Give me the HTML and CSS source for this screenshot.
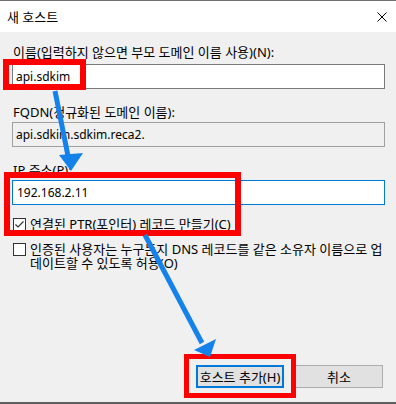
FILE: index.html
```html
<!DOCTYPE html>
<html lang="ko">
<head>
    <meta charset="UTF-8">
    <meta name="viewport" content="width=device-width, initial-scale=1.0">
    <title>새 호스트</title>
    <link rel="stylesheet" href="styles.css">
</head>
<body>
    <div class="dialog">
        <div class="titlebar">
            <span class="title">새 호스트</span>
            <svg class="close" width="10" height="10" viewBox="0 0 10 10">
                <path d="M0.5 0.5 L9.5 9.5 M9.5 0.5 L0.5 9.5" stroke="#000" stroke-width="1" fill="none"/>
            </svg>
        </div>

        <div class="content">
            <div class="field-label first">이름(입력하지 않으면 부모 도메인 이름 사용)(N):</div>
            <div class="textbox">api.sdkim</div>

            <div class="field-label">FQDN(정규화된 도메인 이름):</div>
            <div class="textbox readonly">api.sdkim.sdkim.reca2.</div>

            <div class="field-label">IP 주소(P):</div>
            <div class="textbox focused">192.168.2.11</div>

            <div class="check-row first">
                <span class="checkbox">
                    <svg width="11" height="11" viewBox="0 0 11 11">
                        <path d="M1.5 5.5 L4 8 L9.5 2.5" stroke="#333" stroke-width="1.2" fill="none"/>
                    </svg>
                </span>
                <span class="check-text">연결된 PTR(포인터) 레코드 만들기(C)</span>
            </div>

            <div class="check-row">
                <span class="checkbox"></span>
                <span class="check-text">인증된 사용자는 누구든지 DNS 레코드를 같은 소유자 이름으로 업데이트할 수 있도록 허용(O)</span>
            </div>

            <div class="buttons">
                <button class="btn default">호스트 추가(H)</button>
                <button class="btn">취소</button>
            </div>
        </div>

        <!-- 강조 표시 (빨간 박스, 파란 화살표) -->
        <div class="mark mark-name"></div>
        <div class="mark mark-ip"></div>
        <div class="mark mark-add"></div>

        <svg class="arrows" width="396" height="404" viewBox="0 0 396 404">
            <line x1="55" y1="91" x2="68" y2="156" stroke="#1582ec" stroke-width="5"/>
            <polygon points="59,155 83,153 71,171" fill="#1582ec"/>
            <line x1="145" y1="235" x2="202" y2="343" stroke="#1582ec" stroke-width="5"/>
            <polygon points="194,350 216,339 210,357" fill="#1582ec"/>
        </svg>
    </div>
</body>
</html>
```

FILE: styles.css
```css
* {
    margin: 0;
    padding: 0;
    box-sizing: border-box;
}

body {
    font-family: "Noto Sans", "Noto Sans CJK KR", sans-serif;
    font-size: 13px;
    color: #000;
    background-color: #f0f0f0;
}

.dialog {
    position: relative;
    width: 396px;
    height: 404px;
    border-top: 1px solid #707070;
    border-bottom: 2px solid #5f5f5f;
    background-color: #f0f0f0;
    overflow: hidden;
}

.titlebar {
    height: 31px;
    background-color: #fff;
    display: flex;
    align-items: center;
    justify-content: space-between;
    padding: 0 9px 0 7px;
}

.title {
    line-height: 16px;
}

.content {
    padding: 12px 11px 0 12px;
}

.field-label {
    line-height: 16px;
    padding-left: 1px;
    margin-top: 15px;
    margin-bottom: 2px;
}

.field-label.first {
    margin-top: 0;
    margin-bottom: 4px;
}

/* 입력 상자: 라틴 문자만 있으므로 12px */
.textbox {
    height: 25px;
    border: 1px solid #7a7a7a;
    background-color: #fff;
    padding-left: 3px;
    font-size: 12px;
    line-height: 23px;
    white-space: nowrap;
}

.textbox.readonly {
    background-color: #f0f0f0;
    border-color: #a0a0a0;
}

.textbox.focused {
    border-color: #0078d7;
    padding-left: 4px;
}

.check-row {
    display: flex;
    align-items: flex-start;
    gap: 4px;
    margin-top: 10px;
    padding-left: 1px;
}

.check-row.first {
    margin-top: 11px;
    align-items: center;
}

.check-row.first .check-text {
    line-height: 16px;
}

.checkbox {
    flex: none;
    width: 13px;
    height: 13px;
    border: 1px solid #333;
    background-color: #fff;
    display: flex;
    align-items: center;
    justify-content: center;
    margin-top: 1px;
}

.check-row.first .checkbox {
    margin-top: 0;
}

.check-text {
    line-height: 14px;
    width: 356px;
}

.buttons {
    display: flex;
    justify-content: flex-end;
    gap: 11px;
    margin-top: 95px;
    padding-right: 2px;
}

.btn {
    width: 88px;
    height: 23px;
    border: 1px solid #adadad;
    background-color: #e1e1e1;
    font-family: inherit;
    font-size: 13px;
    color: #000;
    line-height: 20px;
}

.btn.default {
    border: 2px solid #0078d7;
}

.mark {
    position: absolute;
    border: 6px solid #ff0000;
}

.mark-name {
    left: 3px;
    top: 58px;
    width: 83px;
    height: 31px;
}

.mark-ip {
    left: 4px;
    top: 171px;
    width: 237px;
    height: 64px;
}

.mark-add {
    left: 184px;
    top: 353px;
    width: 112px;
    height: 44px;
    border-width: 5px;
}

.arrows {
    position: absolute;
    left: 0;
    top: -1px;
    pointer-events: none;
}
```
